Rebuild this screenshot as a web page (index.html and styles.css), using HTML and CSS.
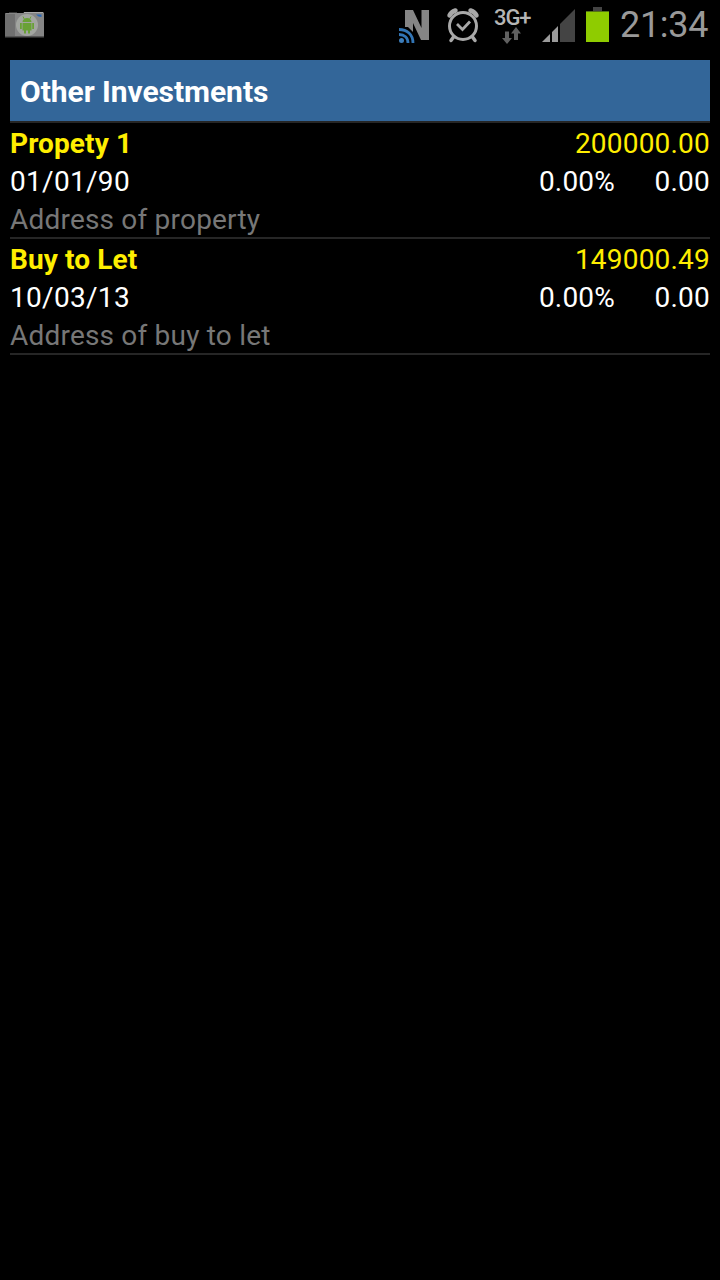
FILE: index.html
```
<!DOCTYPE html>
<html lang="en">
<head>
    <meta charset="UTF-8">
    <meta name="viewport" content="width=device-width, initial-scale=1.0">
    <title>Other Investments</title>
    <link rel="stylesheet" href="styles.css">
</head>
<body>
    <!-- Status bar -->
    <div class="status-bar">
        <svg class="icon camera" width="40" height="28" viewBox="0 0 40 28">
            <path d="M4 1h8v2H4z" fill="#353535"/>
            <path d="M0 3q0-1 1-1h17l2-1h18l1 1v24H0z" fill="#858585"/>
            <path d="M0 3h10v22H0z" fill="#707070"/>
            <path d="M19 1h19v1H19z" fill="#aaa"/>
            <path d="M0 25h39v1.500H0z" fill="#555"/>
            <path d="M31 3.500h5.500V6l-3-.5z" fill="#2867b5"/>
            <circle cx="22" cy="14" r="11" fill="#a2a5a0"/>
            <path d="M17.500 11a4.500 4 0 0 1 9 0zM17.500 12h9v7.500h-9zM15 12h1.800v6H15zM27.200 12H29v6h-1.800zM19 19h2v3.500h-2zM23 19h2v3.500h-2z" fill="#69a136"/>
            <path d="M18 5.500l1.500 3M26 5.500l-1.500 3" stroke="#69a136"/>
        </svg>

        <div class="status-right">
            <svg class="icon nfc" width="32" height="36" viewBox="0 0 32 36">
                <path d="M6 1h8l8.500 18V1H30v30h-8L14 14v17H6z" fill="#858585"/>
                <path d="M0 18h9l7 7v9H0z" fill="#000"/>
                <g fill="none" stroke="#3275b5" stroke-width="2.800">
                    <path d="M0 20.500c8 0 14 5 14 13.500"/>
                    <path d="M0 25.500c5.500 0 9 3 9 8.500"/>
                </g>
                <circle cx="2.500" cy="31.500" r="2.500" fill="#3c7dba"/>
            </svg>
            <svg class="icon alarm" width="34" height="36" viewBox="0 0 34 36" fill="none" stroke="#a8a8a8">
                <circle cx="17" cy="19" r="13.500" stroke-width="3"/>
                <path d="M3.500 8.500Q5 5 9.500 3.500M30.500 8.500Q29 5 24.500 3.500" stroke-width="4.500" stroke-linecap="round"/>
                <path d="M7.500 30l-2.500 3.500M26.500 30l2.500 3.500" stroke-width="3.500" stroke-linecap="round"/>
                <path d="M11 17l5.500 5.500 7.500-8" stroke-width="2.800"/>
            </svg>
            <div class="network">
                <span>3G+</span>
                <svg class="arrows" width="20" height="17" viewBox="0 0 20 17" fill="#606060">
                    <path d="M4 4.500h4V11h3l-5 6-5-6h3zM13 13h4V6.500h3L15 0l-5 6.500h3z"/>
                </svg>
            </div>
            <svg class="icon signal" width="33" height="33" viewBox="0 0 33 33">
                <path d="M0 33L8 25v8zM10 33V23l6-6v16z" fill="#9b9b9b"/>
                <path d="M18 33V15L33 0v33z" fill="#444"/>
            </svg>
            <svg class="icon battery" width="23" height="35" viewBox="0 0 23 35">
                <path d="M7 0h9v4H7z" fill="#444"/>
                <path d="M0 4h23v31H0z" fill="#8fcc00"/>
                <path d="M0 4h23v1H0z" fill="#557515"/>
            </svg>
            <span class="clock">21:34</span>
        </div>
    </div>

    <div class="list">
        <h1 class="list-header">Other Investments</h1>

        <div class="item">
            <div class="row highlight">
                <span class="name">Propety 1</span>
                <span class="amount">200000.00</span>
            </div>
            <div class="row">
                <span class="date">01/01/90</span>
                <span class="percent">0.00%</span>
                <span class="change">0.00</span>
            </div>
            <div class="row note">Address of property</div>
        </div>

        <div class="item">
            <div class="row highlight">
                <span class="name">Buy to Let</span>
                <span class="amount">149000.49</span>
            </div>
            <div class="row">
                <span class="date">10/03/13</span>
                <span class="percent">0.00%</span>
                <span class="change">0.00</span>
            </div>
            <div class="row note">Address of buy to let</div>
        </div>
    </div>
</body>
</html>
```

FILE: styles.css
```
* { box-sizing: border-box; }
body {
    margin: 0;
    min-height: 1280px;
    background: #000;
    color: #fff;
    font-family: Roboto, "Liberation Sans", sans-serif;
    font-size: 28px;
}

/* Status bar */
.status-bar {
    display: flex;
    justify-content: space-between;
    height: 50px;
    padding: 0 11px 0 5px;
}
.status-right { display: flex; }
.icon { display: block; flex: none; }
.camera { margin-top: 11px; }
.nfc { margin-top: 9px; }
.alarm { margin: 7px 0 0 15px; }
.network {
    width: 38px;
    margin: 7px 0 0 14px;
    color: #b5b5b5;
    font-size: 22px;
    font-weight: 500;
    line-height: 21px;
    letter-spacing: -1.1px;
}
.network span { display: block; }
.arrows { display: block; margin: -1px 0 0 7px; }
.signal { margin: 9px 0 0 10px; }
.battery { margin: 7px 0 0 11px; }
.clock {
    width: 89px;
    margin-left: 11px;
    color: #999;
    font-size: 36px;
    line-height: 50px;
    letter-spacing: -0.3px;
}

/* Investment list */
.list { margin: 10px 10px 0; }
.list-header {
    height: 63px;
    margin: 0;
    padding: 1px 10px 0;
    border-bottom: 2px solid #262626;
    background: #336699;
    background-clip: padding-box;
    font-size: 30px;
    font-weight: bold;
    line-height: 61px;
    letter-spacing: -0.05px;
}
.item {
    height: 116px;
    padding-top: 2px;
    border-bottom: 2px solid #262626;
}
.row {
    display: flex;
    height: 38px;
    line-height: 38px;
    letter-spacing: 0.2px;
    white-space: nowrap;
}
.highlight { color: #ffee00; }
.name { flex: 1; font-weight: bold; letter-spacing: 0.1px; }
.date { flex: 1; letter-spacing: 0.3px; }
.change { width: 95px; text-align: right; }
.note { color: #777; }
```
